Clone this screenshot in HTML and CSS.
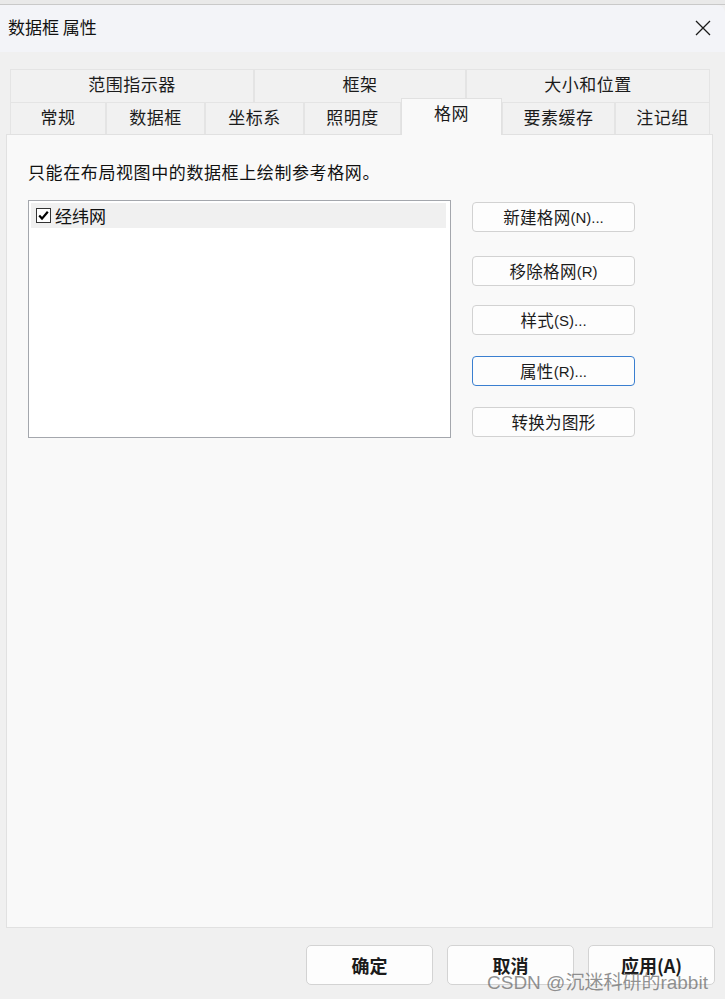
FILE: index.html
```html
<!DOCTYPE html>
<html lang="zh-CN">
<head>
<meta charset="utf-8">
<title>数据框 属性</title>
<link rel="stylesheet" href="styles.css">
</head>
<body>
<div class="topstrip"></div>
<div class="window">
  <div class="titlebar">
    <span class="title">数据框 属性</span>
    <span class="close">
      <svg width="16" height="16" viewBox="0 0 16 16"><path d="M1 1 L15 15 M15 1 L1 15" stroke="#1a1a1a" stroke-width="1.3" fill="none"/></svg>
    </span>
  </div>
  <div class="content">
    <div class="tabs">
      <div class="tabrow">
        <div class="tab w244">范围指示器</div>
        <div class="tab w212">框架</div>
        <div class="tab w244">大小和位置</div>
      </div>
      <div class="tabrow row2">
        <div class="tab w96">常规</div>
        <div class="tab w99">数据框</div>
        <div class="tab w99">坐标系</div>
        <div class="tab w97">照明度</div>
        <div class="tab w101 active">格网</div>
        <div class="tab w113">要素缓存</div>
        <div class="tab w95">注记组</div>
      </div>
    </div>
    <div class="panel">
      <p class="desc">只能在布局视图中的数据框上绘制参考格网。</p>
      <div class="gridrow">
        <div class="listbox">
          <div class="item">
            <span class="check">
              <svg width="13" height="13" viewBox="0 0 13 13"><path d="M2.2 6.6 L5 9.6 L10.8 2.8" stroke="#000" stroke-width="2.2" fill="none"/></svg>
            </span>
            <span class="itemtext">经纬网</span>
          </div>
        </div>
        <div class="sidebtns">
          <button class="btn">新建格网<span class="lat">(N)...</span></button>
          <button class="btn b2">移除格网<span class="lat">(R)</span></button>
          <button class="btn b3">样式<span class="lat">(S)...</span></button>
          <button class="btn focus">属性<span class="lat">(R)...</span></button>
          <button class="btn">转换为图形</button>
        </div>
      </div>
    </div>
    <div class="footer">
      <button class="fbtn">确定</button>
      <button class="fbtn">取消</button>
      <button class="fbtn">应用(A)</button>
    </div>
  </div>
</div>
<div class="watermark">CSDN @沉迷科研的rabbit</div>
</body>
</html>
```
FILE: styles.css
```css
html, body {
  margin: 0;
  padding: 0;
}
body {
  background: #f0f0f0;
  font-family: "Noto Sans CJK SC", "Microsoft YaHei", sans-serif;
  color: #1b1b1b;
  width: 725px;
  height: 999px;
  overflow: hidden;
  position: relative;
}
.topstrip {
  height: 4px;
  background: #e9e9e9;
  border-bottom: 1px solid #c9c9c9;
}
.window {
  background: #f0f0f0;
}
.titlebar {
  box-sizing: border-box;
  height: 47px;
  background: #f3f4f8;
  display: flex;
  align-items: center;
  justify-content: space-between;
  padding-left: 8px;
  padding-right: 14px;
  padding-bottom: 3px;
  border-top-right-radius: 8px;
}
.title {
  font-size: 17px;
  line-height: 22px;
  color: #111;
}
.close {
  display: flex;
  width: 16px;
  height: 16px;
  margin-top: 2px;
}
.content {
  padding-top: 17px;
}
.tabs {
  margin-left: 10px;
  width: 700px;
}
.tabrow {
  display: flex;
}
.row2 {
  height: 32px;
  align-items: flex-end;
}
.tab {
  box-sizing: border-box;
  height: 33px;
  background: #f1f1f1;
  border: 1px solid #e4e4e4;
  border-bottom: none;
  font-size: 17px;
  letter-spacing: 0.5px;
  display: flex;
  align-items: center;
  justify-content: center;
  color: #1b1b1b;
  padding-bottom: 5px;
}
.row2 .tab {
  flex-shrink: 0;
  height: 32px;
  padding-bottom: 4px;
}
.row2 .tab.active {
  height: 37px;
  background: #f9f9f9;
  border-color: #e1e1e1;
  padding-bottom: 9px;
  margin-bottom: -1px;
  position: relative;
  z-index: 1;
}
.w244 { width: 244px; }
.w212 { width: 212px; }
.w96 { width: 96px; }
.w99 { width: 99px; }
.w97 { width: 97px; }
.w101 { width: 101px; }
.w113 { width: 113px; }
.w95 { width: 95px; }

.panel {
  margin-left: 6px;
  width: 707px;
  height: 794px;
  box-sizing: border-box;
  background: #f9f9f9;
  border: 1px solid #e1e1e1;
  padding: 25px 0 0 21px;
}
.desc {
  margin: 0;
  font-size: 17px;
  line-height: 24px;
  letter-spacing: 0.6px;
  color: #111;
}
.gridrow {
  display: flex;
  margin-top: 16px;
}
.listbox {
  box-sizing: border-box;
  width: 423px;
  height: 238px;
  background: #fff;
  border: 1px solid #a4a7ad;
  padding: 2px 4px 0 2px;
}
.item {
  height: 25px;
  background: #f0f0f0;
  display: flex;
  align-items: center;
  padding-left: 5px;
}
.check {
  box-sizing: border-box;
  width: 15px;
  height: 15px;
  border: 1px solid #333;
  background: #fff;
  display: flex;
  align-items: center;
  justify-content: center;
}
.itemtext {
  margin-left: 4px;
  font-size: 17px;
  line-height: 22px;
  color: #111;
}
.sidebtns {
  display: flex;
  flex-direction: column;
  margin-left: 21px;
  padding-top: 2px;
  gap: 21px;
}
.btn {
  box-sizing: border-box;
  width: 163px;
  height: 30px;
  background: #fdfdfd;
  border: 1px solid #d2d2d2;
  border-radius: 4px;
  font-family: "Noto Sans CJK SC", sans-serif;
  font-size: 16.5px;
  letter-spacing: 0.3px;
  color: #1b1b1b;
  padding: 0;
  display: flex;
  align-items: center;
  justify-content: center;
}
.btn.b2 { margin-top: 3px; }
.btn.b3 { margin-top: -2px; }
.btn.focus {
  border: 1px solid #3a7fd0;
}
.lat {
  font-family: "Liberation Sans", "Noto Sans", sans-serif;
  font-size: 15px;
  letter-spacing: 0;
}
.footer {
  display: flex;
  justify-content: flex-end;
  gap: 14px;
  padding-right: 10px;
  margin-top: 17px;
}
.fbtn {
  box-sizing: border-box;
  width: 127px;
  height: 40px;
  background: #fdfdfd;
  border: 1px solid #d3d3d3;
  border-radius: 5px;
  font-family: "Noto Sans CJK SC", sans-serif;
  font-size: 18px;
  font-weight: 700;
  color: #1b1b1b;
  padding: 0;
}
.watermark {
  position: absolute;
  left: 487px;
  top: 970px;
  font-family: "Liberation Sans", "Noto Sans CJK SC", sans-serif;
  font-size: 19px;
  line-height: 26px;
  color: rgba(110, 110, 110, 0.75);
  white-space: nowrap;
}
```
